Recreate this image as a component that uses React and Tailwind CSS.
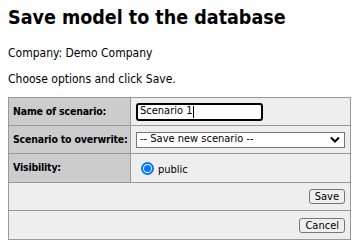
import React from 'react';

const font = { fontFamily: '"DejaVu Sans Condensed", "DejaVu Sans", Verdana, sans-serif' };

export default function App() {
  return (
    <div className="bg-white px-2 text-black" style={font}>
      <h1 className="pt-[6px] text-[19.5px] font-bold leading-[24px]">Save model to the database</h1>
      <p className="mt-[16px] text-[12px] leading-[15px]">Company: Demo Company</p>
      <p className="mt-[11px] text-[12px] leading-[15px]">Choose options and click Save.</p>

      <div className="mt-[10px] grid grid-cols-[122px_1fr] border-r border-b border-[#999] text-[12px]">
        <div className="flex h-[28px] items-center whitespace-nowrap border-t border-l border-[#999] bg-[#ccc] pl-[4px] text-[10.5px] font-bold tracking-[-0.2px]">Name of scenario:</div>
        <div className="flex h-[28px] items-center border-t border-l border-[#999] bg-[#eee] pl-[5px]">
          <div className="flex h-[18px] w-[127px] items-center rounded-[3px] border-2 border-black bg-white pl-[2px] text-[11px]">
            Scenario 1<span className="ml-px inline-block h-[12px] w-px bg-black" />
          </div>
        </div>

        <div className="flex h-[28px] items-center whitespace-nowrap border-t border-l border-[#999] bg-[#ccc] pl-[4px] text-[10.5px] font-bold tracking-[-0.2px]">Scenario to overwrite:</div>
        <div className="flex h-[28px] items-center border-t border-l border-[#999] bg-[#eee] px-[5px]">
          <div className="flex h-[16px] w-full items-center justify-between border border-[#767676] bg-white pl-[3px] pr-[4px] text-[11px]">
            <span>-- Save new scenario --</span>
            <svg width="10" height="7" viewBox="0 0 10 7">
              <path d="M1 1.5 L5 5.5 L9 1.5" fill="none" stroke="black" strokeWidth="2" />
            </svg>
          </div>
        </div>

        <div className="flex h-[29px] items-center whitespace-nowrap border-t border-l border-[#999] bg-[#ccc] pl-[4px] text-[10.5px] font-bold tracking-[-0.2px]">Visibility:</div>
        <div className="flex h-[29px] items-center border-t border-l border-[#999] bg-[#eee] pl-[10px]">
          <span className="flex h-[13px] w-[13px] items-center justify-center rounded-full border-2 border-[#0075ff] bg-white">
            <span className="h-[7px] w-[7px] rounded-full bg-[#0075ff]" />
          </span>
          <span className="ml-[4px] mt-[5px] text-[11px]">public</span>
        </div>

        <div className="col-span-2 flex h-[28px] items-center justify-end border-t border-l border-[#999] bg-[#eee] pr-[5px]">
          <button className="h-[15px] rounded-[3px] border border-[#767676] bg-[#efefef] px-[5px] text-[11px] leading-[13px]">Save</button>
        </div>
        <div className="col-span-2 flex h-[29px] items-center justify-end border-t border-l border-[#999] bg-[#eee] pr-[5px]">
          <button className="h-[15px] rounded-[3px] border border-[#767676] bg-[#efefef] px-[5px] text-[11px] leading-[13px]">Cancel</button>
        </div>
      </div>
    </div>
  );
}
